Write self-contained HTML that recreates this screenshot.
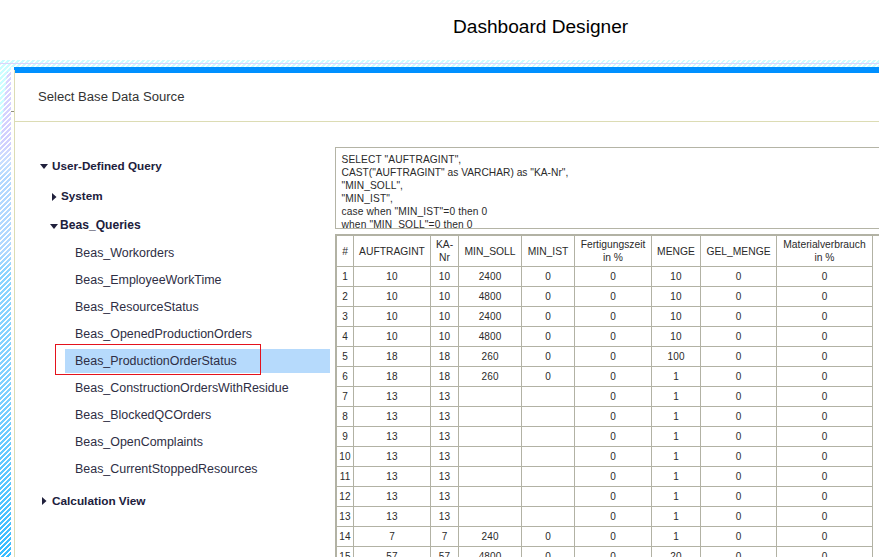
<!DOCTYPE html>
<html><head><meta charset="utf-8"><style>
html,body{margin:0;padding:0;}
body{width:879px;height:557px;overflow:hidden;position:relative;background:#fff;font-family:"Liberation Sans",sans-serif;}
.t{position:absolute;white-space:pre;}
.a{position:absolute;}
.hatchtop{position:absolute;left:0;top:60px;width:879px;height:7px;background:repeating-linear-gradient(135deg,#ffffff 0px,#ffffff 1.6px,#ccfdff 1.6px,#ccfdff 3.54px) fixed;}
.hatchleft{position:absolute;left:0;top:67px;width:11px;height:490px;}
.cell{position:absolute;text-align:center;font-size:10.3px;line-height:13px;color:#2a2a2a;white-space:nowrap;}
</style></head><body>
<div class="t" style="left:453px;top:8.38px;font-size:19.1px;line-height:38px;font-weight:normal;color:#000;">Dashboard Designer</div>
<div class="hatchtop"></div>
<div class="a" style="left:0;top:63px;width:879px;height:1px;background:#dcd4fa"></div>
<div class="hatchleft" style="background:linear-gradient(#ccfdff 0px,#ccfdff 80px,#b4d8ff 110px,#b0d8ff 185px,#8cd4ff 205px,#80d0ff 320px,#58c6ff 420px,#38bcff 490px)"></div>
<div class="a" style="left:0px;top:72px;width:11px;height:105px;background:linear-gradient(#d8d4ff,#d0d0ff 70%,rgba(180,216,255,0));clip-path:polygon(7px 0,11px 0,11px 105px,0 105px,0 75px)"></div>
<div class="hatchleft" style="background:repeating-linear-gradient(135deg,#ffffff 0px,#ffffff 1.6px,rgba(255,255,255,0) 1.6px,rgba(255,255,255,0) 3.54px) fixed"></div>
<div class="a" style="left:11px;top:67px;width:3px;height:490px;background:#fff"></div>
<div class="a" style="left:11px;top:111px;width:3px;height:1px;background:#909080"></div>
<div class="a" style="left:14px;top:67px;width:865px;height:6px;background:#0090ff"></div>
<div class="a" style="left:14px;top:70px;width:1px;height:487px;background:linear-gradient(#f0e6b8,#dcdcb4 4px)"></div>
<div class="a" style="left:15px;top:121px;width:864px;height:1px;background:#dcdcb4"></div>
<div class="t" style="left:38px;top:83.95px;font-size:13.12px;line-height:26px;font-weight:normal;color:#333;">Select Base Data Source</div>
<div class="t" style="left:52px;top:154.45px;font-size:11.7px;line-height:23px;font-weight:bold;color:#20203c;">User-Defined Query</div>
<svg class="a" style="left:40px;top:164px" width="8" height="5"><path d="M0 0H8L4 5Z" fill="#20203c"/></svg>
<div class="t" style="left:61px;top:184.45px;font-size:11.7px;line-height:23px;font-weight:bold;color:#20203c;">System</div>
<svg class="a" style="left:52px;top:193px" width="5" height="8"><path d="M0 0V8L4.5 4Z" fill="#20203c"/></svg>
<div class="t" style="left:60px;top:213.11px;font-size:12.1px;line-height:24px;font-weight:bold;color:#20203c;">Beas_Queries</div>
<svg class="a" style="left:50px;top:224px" width="8" height="5"><path d="M0 0H8L4 5Z" fill="#20203c"/></svg>
<div class="a" style="left:65px;top:349px;width:265px;height:24px;background:#b6dafc"></div>
<div class="a" style="left:55px;top:344px;width:204px;height:29px;border:1px solid #e4121c"></div>
<div class="t" style="left:75px;top:240.89px;font-size:12.45px;line-height:25px;font-weight:normal;color:#2e2e44;">Beas_Workorders</div>
<div class="t" style="left:75px;top:267.89px;font-size:12.45px;line-height:25px;font-weight:normal;color:#2e2e44;">Beas_EmployeeWorkTime</div>
<div class="t" style="left:75px;top:294.89px;font-size:12.45px;line-height:25px;font-weight:normal;color:#2e2e44;">Beas_ResourceStatus</div>
<div class="t" style="left:75px;top:321.89px;font-size:12.45px;line-height:25px;font-weight:normal;color:#2e2e44;">Beas_OpenedProductionOrders</div>
<div class="t" style="left:75px;top:348.89px;font-size:12.45px;line-height:25px;font-weight:normal;color:#2e2e44;">Beas_ProductionOrderStatus</div>
<div class="t" style="left:75px;top:375.89px;font-size:12.45px;line-height:25px;font-weight:normal;color:#2e2e44;">Beas_ConstructionOrdersWithResidue</div>
<div class="t" style="left:75px;top:402.89px;font-size:12.45px;line-height:25px;font-weight:normal;color:#2e2e44;">Beas_BlockedQCOrders</div>
<div class="t" style="left:75px;top:429.89px;font-size:12.45px;line-height:25px;font-weight:normal;color:#2e2e44;">Beas_OpenComplaints</div>
<div class="t" style="left:75px;top:456.89px;font-size:12.45px;line-height:25px;font-weight:normal;color:#2e2e44;">Beas_CurrentStoppedResources</div>
<div class="t" style="left:52px;top:488.71px;font-size:11.8px;line-height:24px;font-weight:bold;color:#20203c;">Calculation View</div>
<svg class="a" style="left:42px;top:497px" width="5" height="8"><path d="M0 0V8L4.5 4Z" fill="#20203c"/></svg>
<div class="a" style="left:335px;top:147px;width:600px;height:80px;border:1px solid #b4b4a6;overflow:hidden">
<div class="t" style="left:5.5px;top:2.27px;font-size:10.2px;line-height:20px;font-weight:normal;color:#2a2a2a;letter-spacing:0.12px">SELECT &quot;AUFTRAGINT&quot;,</div>
<div class="t" style="left:5.5px;top:15.27px;font-size:10.2px;line-height:20px;font-weight:normal;color:#2a2a2a;letter-spacing:0.02px">CAST(&quot;AUFTRAGINT&quot; as VARCHAR) as &quot;KA-Nr&quot;,</div>
<div class="t" style="left:5.5px;top:28.27px;font-size:10.2px;line-height:20px;font-weight:normal;color:#2a2a2a;letter-spacing:0.1px">&quot;MIN_SOLL&quot;,</div>
<div class="t" style="left:5.5px;top:41.27px;font-size:10.2px;line-height:20px;font-weight:normal;color:#2a2a2a;letter-spacing:0.12px">&quot;MIN_IST&quot;,</div>
<div class="t" style="left:5.5px;top:54.27px;font-size:10.2px;line-height:20px;font-weight:normal;color:#2a2a2a;letter-spacing:0.15px">case when &quot;MIN_IST&quot;=0 then 0</div>
<div class="t" style="left:5.5px;top:67.27px;font-size:10.2px;line-height:20px;font-weight:normal;color:#2a2a2a;letter-spacing:0.15px">when &quot;MIN_SOLL&quot;=0 then 0</div>
</div>
<div class="a" style="left:335px;top:234px;width:544px;height:2px;background:#b2b2a4"></div>
<div class="a" style="left:335px;top:234px;width:2px;height:323px;background:#b2b2a4"></div>
<div class="a" style="left:353px;top:236px;width:1px;height:321px;background:#b2b2a4"></div>
<div class="a" style="left:430px;top:236px;width:1px;height:321px;background:#b2b2a4"></div>
<div class="a" style="left:458px;top:236px;width:1px;height:321px;background:#b2b2a4"></div>
<div class="a" style="left:521px;top:236px;width:1px;height:321px;background:#b2b2a4"></div>
<div class="a" style="left:574px;top:236px;width:1px;height:321px;background:#b2b2a4"></div>
<div class="a" style="left:651px;top:236px;width:1px;height:321px;background:#b2b2a4"></div>
<div class="a" style="left:700px;top:236px;width:1px;height:321px;background:#b2b2a4"></div>
<div class="a" style="left:776px;top:236px;width:1px;height:321px;background:#b2b2a4"></div>
<div class="a" style="left:872px;top:236px;width:1px;height:321px;background:#b2b2a4"></div>
<div class="a" style="left:337px;top:266px;width:536px;height:1px;background:#b2b2a4"></div>
<div class="a" style="left:337px;top:286px;width:536px;height:1px;background:#b2b2a4"></div>
<div class="a" style="left:337px;top:306px;width:536px;height:1px;background:#b2b2a4"></div>
<div class="a" style="left:337px;top:326px;width:536px;height:1px;background:#b2b2a4"></div>
<div class="a" style="left:337px;top:346px;width:536px;height:1px;background:#b2b2a4"></div>
<div class="a" style="left:337px;top:366px;width:536px;height:1px;background:#b2b2a4"></div>
<div class="a" style="left:337px;top:386px;width:536px;height:1px;background:#b2b2a4"></div>
<div class="a" style="left:337px;top:406px;width:536px;height:1px;background:#b2b2a4"></div>
<div class="a" style="left:337px;top:426px;width:536px;height:1px;background:#b2b2a4"></div>
<div class="a" style="left:337px;top:446px;width:536px;height:1px;background:#b2b2a4"></div>
<div class="a" style="left:337px;top:466px;width:536px;height:1px;background:#b2b2a4"></div>
<div class="a" style="left:337px;top:486px;width:536px;height:1px;background:#b2b2a4"></div>
<div class="a" style="left:337px;top:506px;width:536px;height:1px;background:#b2b2a4"></div>
<div class="a" style="left:337px;top:526px;width:536px;height:1px;background:#b2b2a4"></div>
<div class="a" style="left:337px;top:546px;width:536px;height:1px;background:#b2b2a4"></div>
<div class="cell" style="left:337px;top:236px;width:16px;height:30px;display:flex;align-items:center;justify-content:center;"><div>#</div></div>
<div class="cell" style="left:354px;top:236px;width:76px;height:30px;display:flex;align-items:center;justify-content:center;"><div>AUFTRAGINT</div></div>
<div class="cell" style="left:431px;top:236px;width:27px;height:30px;display:flex;align-items:center;justify-content:center;"><div>KA-<br>Nr</div></div>
<div class="cell" style="left:459px;top:236px;width:62px;height:30px;display:flex;align-items:center;justify-content:center;"><div>MIN_SOLL</div></div>
<div class="cell" style="left:522px;top:236px;width:52px;height:30px;display:flex;align-items:center;justify-content:center;"><div>MIN_IST</div></div>
<div class="cell" style="left:575px;top:236px;width:76px;height:30px;display:flex;align-items:center;justify-content:center;"><div>Fertigungszeit<br>in %</div></div>
<div class="cell" style="left:652px;top:236px;width:48px;height:30px;display:flex;align-items:center;justify-content:center;"><div>MENGE</div></div>
<div class="cell" style="left:701px;top:236px;width:75px;height:30px;display:flex;align-items:center;justify-content:center;"><div>GEL_MENGE</div></div>
<div class="cell" style="left:777px;top:236px;width:95px;height:30px;display:flex;align-items:center;justify-content:center;"><div>Materialverbrauch<br>in %</div></div>
<div class="cell" style="left:337px;top:267px;width:16px;height:19px;line-height:19px;text-align:center;font-size:10px;letter-spacing:0.15px;padding-left:0.15px;box-sizing:border-box">1</div>
<div class="cell" style="left:354px;top:267px;width:76px;height:19px;line-height:19px;text-align:center;font-size:10px;letter-spacing:0.15px;padding-left:0.15px;box-sizing:border-box">10</div>
<div class="cell" style="left:431px;top:267px;width:27px;height:19px;line-height:19px;text-align:center;font-size:10px;letter-spacing:0.15px;padding-left:0.15px;box-sizing:border-box">10</div>
<div class="cell" style="left:459px;top:267px;width:62px;height:19px;line-height:19px;text-align:center;font-size:10px;letter-spacing:0.15px;padding-left:0.15px;box-sizing:border-box">2400</div>
<div class="cell" style="left:522px;top:267px;width:52px;height:19px;line-height:19px;text-align:center;font-size:10px;letter-spacing:0.15px;padding-left:0.15px;box-sizing:border-box">0</div>
<div class="cell" style="left:575px;top:267px;width:76px;height:19px;line-height:19px;text-align:center;font-size:10px;letter-spacing:0.15px;padding-left:0.15px;box-sizing:border-box">0</div>
<div class="cell" style="left:652px;top:267px;width:48px;height:19px;line-height:19px;text-align:center;font-size:10px;letter-spacing:0.15px;padding-left:0.15px;box-sizing:border-box">10</div>
<div class="cell" style="left:701px;top:267px;width:75px;height:19px;line-height:19px;text-align:center;font-size:10px;letter-spacing:0.15px;padding-left:0.15px;box-sizing:border-box">0</div>
<div class="cell" style="left:777px;top:267px;width:95px;height:19px;line-height:19px;text-align:center;font-size:10px;letter-spacing:0.15px;padding-left:0.15px;box-sizing:border-box">0</div>
<div class="cell" style="left:337px;top:287px;width:16px;height:19px;line-height:19px;text-align:center;font-size:10px;letter-spacing:0.15px;padding-left:0.15px;box-sizing:border-box">2</div>
<div class="cell" style="left:354px;top:287px;width:76px;height:19px;line-height:19px;text-align:center;font-size:10px;letter-spacing:0.15px;padding-left:0.15px;box-sizing:border-box">10</div>
<div class="cell" style="left:431px;top:287px;width:27px;height:19px;line-height:19px;text-align:center;font-size:10px;letter-spacing:0.15px;padding-left:0.15px;box-sizing:border-box">10</div>
<div class="cell" style="left:459px;top:287px;width:62px;height:19px;line-height:19px;text-align:center;font-size:10px;letter-spacing:0.15px;padding-left:0.15px;box-sizing:border-box">4800</div>
<div class="cell" style="left:522px;top:287px;width:52px;height:19px;line-height:19px;text-align:center;font-size:10px;letter-spacing:0.15px;padding-left:0.15px;box-sizing:border-box">0</div>
<div class="cell" style="left:575px;top:287px;width:76px;height:19px;line-height:19px;text-align:center;font-size:10px;letter-spacing:0.15px;padding-left:0.15px;box-sizing:border-box">0</div>
<div class="cell" style="left:652px;top:287px;width:48px;height:19px;line-height:19px;text-align:center;font-size:10px;letter-spacing:0.15px;padding-left:0.15px;box-sizing:border-box">10</div>
<div class="cell" style="left:701px;top:287px;width:75px;height:19px;line-height:19px;text-align:center;font-size:10px;letter-spacing:0.15px;padding-left:0.15px;box-sizing:border-box">0</div>
<div class="cell" style="left:777px;top:287px;width:95px;height:19px;line-height:19px;text-align:center;font-size:10px;letter-spacing:0.15px;padding-left:0.15px;box-sizing:border-box">0</div>
<div class="cell" style="left:337px;top:307px;width:16px;height:19px;line-height:19px;text-align:center;font-size:10px;letter-spacing:0.15px;padding-left:0.15px;box-sizing:border-box">3</div>
<div class="cell" style="left:354px;top:307px;width:76px;height:19px;line-height:19px;text-align:center;font-size:10px;letter-spacing:0.15px;padding-left:0.15px;box-sizing:border-box">10</div>
<div class="cell" style="left:431px;top:307px;width:27px;height:19px;line-height:19px;text-align:center;font-size:10px;letter-spacing:0.15px;padding-left:0.15px;box-sizing:border-box">10</div>
<div class="cell" style="left:459px;top:307px;width:62px;height:19px;line-height:19px;text-align:center;font-size:10px;letter-spacing:0.15px;padding-left:0.15px;box-sizing:border-box">2400</div>
<div class="cell" style="left:522px;top:307px;width:52px;height:19px;line-height:19px;text-align:center;font-size:10px;letter-spacing:0.15px;padding-left:0.15px;box-sizing:border-box">0</div>
<div class="cell" style="left:575px;top:307px;width:76px;height:19px;line-height:19px;text-align:center;font-size:10px;letter-spacing:0.15px;padding-left:0.15px;box-sizing:border-box">0</div>
<div class="cell" style="left:652px;top:307px;width:48px;height:19px;line-height:19px;text-align:center;font-size:10px;letter-spacing:0.15px;padding-left:0.15px;box-sizing:border-box">10</div>
<div class="cell" style="left:701px;top:307px;width:75px;height:19px;line-height:19px;text-align:center;font-size:10px;letter-spacing:0.15px;padding-left:0.15px;box-sizing:border-box">0</div>
<div class="cell" style="left:777px;top:307px;width:95px;height:19px;line-height:19px;text-align:center;font-size:10px;letter-spacing:0.15px;padding-left:0.15px;box-sizing:border-box">0</div>
<div class="cell" style="left:337px;top:327px;width:16px;height:19px;line-height:19px;text-align:center;font-size:10px;letter-spacing:0.15px;padding-left:0.15px;box-sizing:border-box">4</div>
<div class="cell" style="left:354px;top:327px;width:76px;height:19px;line-height:19px;text-align:center;font-size:10px;letter-spacing:0.15px;padding-left:0.15px;box-sizing:border-box">10</div>
<div class="cell" style="left:431px;top:327px;width:27px;height:19px;line-height:19px;text-align:center;font-size:10px;letter-spacing:0.15px;padding-left:0.15px;box-sizing:border-box">10</div>
<div class="cell" style="left:459px;top:327px;width:62px;height:19px;line-height:19px;text-align:center;font-size:10px;letter-spacing:0.15px;padding-left:0.15px;box-sizing:border-box">4800</div>
<div class="cell" style="left:522px;top:327px;width:52px;height:19px;line-height:19px;text-align:center;font-size:10px;letter-spacing:0.15px;padding-left:0.15px;box-sizing:border-box">0</div>
<div class="cell" style="left:575px;top:327px;width:76px;height:19px;line-height:19px;text-align:center;font-size:10px;letter-spacing:0.15px;padding-left:0.15px;box-sizing:border-box">0</div>
<div class="cell" style="left:652px;top:327px;width:48px;height:19px;line-height:19px;text-align:center;font-size:10px;letter-spacing:0.15px;padding-left:0.15px;box-sizing:border-box">10</div>
<div class="cell" style="left:701px;top:327px;width:75px;height:19px;line-height:19px;text-align:center;font-size:10px;letter-spacing:0.15px;padding-left:0.15px;box-sizing:border-box">0</div>
<div class="cell" style="left:777px;top:327px;width:95px;height:19px;line-height:19px;text-align:center;font-size:10px;letter-spacing:0.15px;padding-left:0.15px;box-sizing:border-box">0</div>
<div class="cell" style="left:337px;top:347px;width:16px;height:19px;line-height:19px;text-align:center;font-size:10px;letter-spacing:0.15px;padding-left:0.15px;box-sizing:border-box">5</div>
<div class="cell" style="left:354px;top:347px;width:76px;height:19px;line-height:19px;text-align:center;font-size:10px;letter-spacing:0.15px;padding-left:0.15px;box-sizing:border-box">18</div>
<div class="cell" style="left:431px;top:347px;width:27px;height:19px;line-height:19px;text-align:center;font-size:10px;letter-spacing:0.15px;padding-left:0.15px;box-sizing:border-box">18</div>
<div class="cell" style="left:459px;top:347px;width:62px;height:19px;line-height:19px;text-align:center;font-size:10px;letter-spacing:0.15px;padding-left:0.15px;box-sizing:border-box">260</div>
<div class="cell" style="left:522px;top:347px;width:52px;height:19px;line-height:19px;text-align:center;font-size:10px;letter-spacing:0.15px;padding-left:0.15px;box-sizing:border-box">0</div>
<div class="cell" style="left:575px;top:347px;width:76px;height:19px;line-height:19px;text-align:center;font-size:10px;letter-spacing:0.15px;padding-left:0.15px;box-sizing:border-box">0</div>
<div class="cell" style="left:652px;top:347px;width:48px;height:19px;line-height:19px;text-align:center;font-size:10px;letter-spacing:0.15px;padding-left:0.15px;box-sizing:border-box">100</div>
<div class="cell" style="left:701px;top:347px;width:75px;height:19px;line-height:19px;text-align:center;font-size:10px;letter-spacing:0.15px;padding-left:0.15px;box-sizing:border-box">0</div>
<div class="cell" style="left:777px;top:347px;width:95px;height:19px;line-height:19px;text-align:center;font-size:10px;letter-spacing:0.15px;padding-left:0.15px;box-sizing:border-box">0</div>
<div class="cell" style="left:337px;top:367px;width:16px;height:19px;line-height:19px;text-align:center;font-size:10px;letter-spacing:0.15px;padding-left:0.15px;box-sizing:border-box">6</div>
<div class="cell" style="left:354px;top:367px;width:76px;height:19px;line-height:19px;text-align:center;font-size:10px;letter-spacing:0.15px;padding-left:0.15px;box-sizing:border-box">18</div>
<div class="cell" style="left:431px;top:367px;width:27px;height:19px;line-height:19px;text-align:center;font-size:10px;letter-spacing:0.15px;padding-left:0.15px;box-sizing:border-box">18</div>
<div class="cell" style="left:459px;top:367px;width:62px;height:19px;line-height:19px;text-align:center;font-size:10px;letter-spacing:0.15px;padding-left:0.15px;box-sizing:border-box">260</div>
<div class="cell" style="left:522px;top:367px;width:52px;height:19px;line-height:19px;text-align:center;font-size:10px;letter-spacing:0.15px;padding-left:0.15px;box-sizing:border-box">0</div>
<div class="cell" style="left:575px;top:367px;width:76px;height:19px;line-height:19px;text-align:center;font-size:10px;letter-spacing:0.15px;padding-left:0.15px;box-sizing:border-box">0</div>
<div class="cell" style="left:652px;top:367px;width:48px;height:19px;line-height:19px;text-align:center;font-size:10px;letter-spacing:0.15px;padding-left:0.15px;box-sizing:border-box">1</div>
<div class="cell" style="left:701px;top:367px;width:75px;height:19px;line-height:19px;text-align:center;font-size:10px;letter-spacing:0.15px;padding-left:0.15px;box-sizing:border-box">0</div>
<div class="cell" style="left:777px;top:367px;width:95px;height:19px;line-height:19px;text-align:center;font-size:10px;letter-spacing:0.15px;padding-left:0.15px;box-sizing:border-box">0</div>
<div class="cell" style="left:337px;top:387px;width:16px;height:19px;line-height:19px;text-align:center;font-size:10px;letter-spacing:0.15px;padding-left:0.15px;box-sizing:border-box">7</div>
<div class="cell" style="left:354px;top:387px;width:76px;height:19px;line-height:19px;text-align:center;font-size:10px;letter-spacing:0.15px;padding-left:0.15px;box-sizing:border-box">13</div>
<div class="cell" style="left:431px;top:387px;width:27px;height:19px;line-height:19px;text-align:center;font-size:10px;letter-spacing:0.15px;padding-left:0.15px;box-sizing:border-box">13</div>
<div class="cell" style="left:459px;top:387px;width:62px;height:19px;line-height:19px;text-align:center;font-size:10px;letter-spacing:0.15px;padding-left:0.15px;box-sizing:border-box"></div>
<div class="cell" style="left:522px;top:387px;width:52px;height:19px;line-height:19px;text-align:center;font-size:10px;letter-spacing:0.15px;padding-left:0.15px;box-sizing:border-box"></div>
<div class="cell" style="left:575px;top:387px;width:76px;height:19px;line-height:19px;text-align:center;font-size:10px;letter-spacing:0.15px;padding-left:0.15px;box-sizing:border-box">0</div>
<div class="cell" style="left:652px;top:387px;width:48px;height:19px;line-height:19px;text-align:center;font-size:10px;letter-spacing:0.15px;padding-left:0.15px;box-sizing:border-box">1</div>
<div class="cell" style="left:701px;top:387px;width:75px;height:19px;line-height:19px;text-align:center;font-size:10px;letter-spacing:0.15px;padding-left:0.15px;box-sizing:border-box">0</div>
<div class="cell" style="left:777px;top:387px;width:95px;height:19px;line-height:19px;text-align:center;font-size:10px;letter-spacing:0.15px;padding-left:0.15px;box-sizing:border-box">0</div>
<div class="cell" style="left:337px;top:407px;width:16px;height:19px;line-height:19px;text-align:center;font-size:10px;letter-spacing:0.15px;padding-left:0.15px;box-sizing:border-box">8</div>
<div class="cell" style="left:354px;top:407px;width:76px;height:19px;line-height:19px;text-align:center;font-size:10px;letter-spacing:0.15px;padding-left:0.15px;box-sizing:border-box">13</div>
<div class="cell" style="left:431px;top:407px;width:27px;height:19px;line-height:19px;text-align:center;font-size:10px;letter-spacing:0.15px;padding-left:0.15px;box-sizing:border-box">13</div>
<div class="cell" style="left:459px;top:407px;width:62px;height:19px;line-height:19px;text-align:center;font-size:10px;letter-spacing:0.15px;padding-left:0.15px;box-sizing:border-box"></div>
<div class="cell" style="left:522px;top:407px;width:52px;height:19px;line-height:19px;text-align:center;font-size:10px;letter-spacing:0.15px;padding-left:0.15px;box-sizing:border-box"></div>
<div class="cell" style="left:575px;top:407px;width:76px;height:19px;line-height:19px;text-align:center;font-size:10px;letter-spacing:0.15px;padding-left:0.15px;box-sizing:border-box">0</div>
<div class="cell" style="left:652px;top:407px;width:48px;height:19px;line-height:19px;text-align:center;font-size:10px;letter-spacing:0.15px;padding-left:0.15px;box-sizing:border-box">1</div>
<div class="cell" style="left:701px;top:407px;width:75px;height:19px;line-height:19px;text-align:center;font-size:10px;letter-spacing:0.15px;padding-left:0.15px;box-sizing:border-box">0</div>
<div class="cell" style="left:777px;top:407px;width:95px;height:19px;line-height:19px;text-align:center;font-size:10px;letter-spacing:0.15px;padding-left:0.15px;box-sizing:border-box">0</div>
<div class="cell" style="left:337px;top:427px;width:16px;height:19px;line-height:19px;text-align:center;font-size:10px;letter-spacing:0.15px;padding-left:0.15px;box-sizing:border-box">9</div>
<div class="cell" style="left:354px;top:427px;width:76px;height:19px;line-height:19px;text-align:center;font-size:10px;letter-spacing:0.15px;padding-left:0.15px;box-sizing:border-box">13</div>
<div class="cell" style="left:431px;top:427px;width:27px;height:19px;line-height:19px;text-align:center;font-size:10px;letter-spacing:0.15px;padding-left:0.15px;box-sizing:border-box">13</div>
<div class="cell" style="left:459px;top:427px;width:62px;height:19px;line-height:19px;text-align:center;font-size:10px;letter-spacing:0.15px;padding-left:0.15px;box-sizing:border-box"></div>
<div class="cell" style="left:522px;top:427px;width:52px;height:19px;line-height:19px;text-align:center;font-size:10px;letter-spacing:0.15px;padding-left:0.15px;box-sizing:border-box"></div>
<div class="cell" style="left:575px;top:427px;width:76px;height:19px;line-height:19px;text-align:center;font-size:10px;letter-spacing:0.15px;padding-left:0.15px;box-sizing:border-box">0</div>
<div class="cell" style="left:652px;top:427px;width:48px;height:19px;line-height:19px;text-align:center;font-size:10px;letter-spacing:0.15px;padding-left:0.15px;box-sizing:border-box">1</div>
<div class="cell" style="left:701px;top:427px;width:75px;height:19px;line-height:19px;text-align:center;font-size:10px;letter-spacing:0.15px;padding-left:0.15px;box-sizing:border-box">0</div>
<div class="cell" style="left:777px;top:427px;width:95px;height:19px;line-height:19px;text-align:center;font-size:10px;letter-spacing:0.15px;padding-left:0.15px;box-sizing:border-box">0</div>
<div class="cell" style="left:337px;top:447px;width:16px;height:19px;line-height:19px;text-align:center;font-size:10px;letter-spacing:0.15px;padding-left:0.15px;box-sizing:border-box">10</div>
<div class="cell" style="left:354px;top:447px;width:76px;height:19px;line-height:19px;text-align:center;font-size:10px;letter-spacing:0.15px;padding-left:0.15px;box-sizing:border-box">13</div>
<div class="cell" style="left:431px;top:447px;width:27px;height:19px;line-height:19px;text-align:center;font-size:10px;letter-spacing:0.15px;padding-left:0.15px;box-sizing:border-box">13</div>
<div class="cell" style="left:459px;top:447px;width:62px;height:19px;line-height:19px;text-align:center;font-size:10px;letter-spacing:0.15px;padding-left:0.15px;box-sizing:border-box"></div>
<div class="cell" style="left:522px;top:447px;width:52px;height:19px;line-height:19px;text-align:center;font-size:10px;letter-spacing:0.15px;padding-left:0.15px;box-sizing:border-box"></div>
<div class="cell" style="left:575px;top:447px;width:76px;height:19px;line-height:19px;text-align:center;font-size:10px;letter-spacing:0.15px;padding-left:0.15px;box-sizing:border-box">0</div>
<div class="cell" style="left:652px;top:447px;width:48px;height:19px;line-height:19px;text-align:center;font-size:10px;letter-spacing:0.15px;padding-left:0.15px;box-sizing:border-box">1</div>
<div class="cell" style="left:701px;top:447px;width:75px;height:19px;line-height:19px;text-align:center;font-size:10px;letter-spacing:0.15px;padding-left:0.15px;box-sizing:border-box">0</div>
<div class="cell" style="left:777px;top:447px;width:95px;height:19px;line-height:19px;text-align:center;font-size:10px;letter-spacing:0.15px;padding-left:0.15px;box-sizing:border-box">0</div>
<div class="cell" style="left:337px;top:467px;width:16px;height:19px;line-height:19px;text-align:center;font-size:10px;letter-spacing:0.15px;padding-left:0.15px;box-sizing:border-box">11</div>
<div class="cell" style="left:354px;top:467px;width:76px;height:19px;line-height:19px;text-align:center;font-size:10px;letter-spacing:0.15px;padding-left:0.15px;box-sizing:border-box">13</div>
<div class="cell" style="left:431px;top:467px;width:27px;height:19px;line-height:19px;text-align:center;font-size:10px;letter-spacing:0.15px;padding-left:0.15px;box-sizing:border-box">13</div>
<div class="cell" style="left:459px;top:467px;width:62px;height:19px;line-height:19px;text-align:center;font-size:10px;letter-spacing:0.15px;padding-left:0.15px;box-sizing:border-box"></div>
<div class="cell" style="left:522px;top:467px;width:52px;height:19px;line-height:19px;text-align:center;font-size:10px;letter-spacing:0.15px;padding-left:0.15px;box-sizing:border-box"></div>
<div class="cell" style="left:575px;top:467px;width:76px;height:19px;line-height:19px;text-align:center;font-size:10px;letter-spacing:0.15px;padding-left:0.15px;box-sizing:border-box">0</div>
<div class="cell" style="left:652px;top:467px;width:48px;height:19px;line-height:19px;text-align:center;font-size:10px;letter-spacing:0.15px;padding-left:0.15px;box-sizing:border-box">1</div>
<div class="cell" style="left:701px;top:467px;width:75px;height:19px;line-height:19px;text-align:center;font-size:10px;letter-spacing:0.15px;padding-left:0.15px;box-sizing:border-box">0</div>
<div class="cell" style="left:777px;top:467px;width:95px;height:19px;line-height:19px;text-align:center;font-size:10px;letter-spacing:0.15px;padding-left:0.15px;box-sizing:border-box">0</div>
<div class="cell" style="left:337px;top:487px;width:16px;height:19px;line-height:19px;text-align:center;font-size:10px;letter-spacing:0.15px;padding-left:0.15px;box-sizing:border-box">12</div>
<div class="cell" style="left:354px;top:487px;width:76px;height:19px;line-height:19px;text-align:center;font-size:10px;letter-spacing:0.15px;padding-left:0.15px;box-sizing:border-box">13</div>
<div class="cell" style="left:431px;top:487px;width:27px;height:19px;line-height:19px;text-align:center;font-size:10px;letter-spacing:0.15px;padding-left:0.15px;box-sizing:border-box">13</div>
<div class="cell" style="left:459px;top:487px;width:62px;height:19px;line-height:19px;text-align:center;font-size:10px;letter-spacing:0.15px;padding-left:0.15px;box-sizing:border-box"></div>
<div class="cell" style="left:522px;top:487px;width:52px;height:19px;line-height:19px;text-align:center;font-size:10px;letter-spacing:0.15px;padding-left:0.15px;box-sizing:border-box"></div>
<div class="cell" style="left:575px;top:487px;width:76px;height:19px;line-height:19px;text-align:center;font-size:10px;letter-spacing:0.15px;padding-left:0.15px;box-sizing:border-box">0</div>
<div class="cell" style="left:652px;top:487px;width:48px;height:19px;line-height:19px;text-align:center;font-size:10px;letter-spacing:0.15px;padding-left:0.15px;box-sizing:border-box">1</div>
<div class="cell" style="left:701px;top:487px;width:75px;height:19px;line-height:19px;text-align:center;font-size:10px;letter-spacing:0.15px;padding-left:0.15px;box-sizing:border-box">0</div>
<div class="cell" style="left:777px;top:487px;width:95px;height:19px;line-height:19px;text-align:center;font-size:10px;letter-spacing:0.15px;padding-left:0.15px;box-sizing:border-box">0</div>
<div class="cell" style="left:337px;top:507px;width:16px;height:19px;line-height:19px;text-align:center;font-size:10px;letter-spacing:0.15px;padding-left:0.15px;box-sizing:border-box">13</div>
<div class="cell" style="left:354px;top:507px;width:76px;height:19px;line-height:19px;text-align:center;font-size:10px;letter-spacing:0.15px;padding-left:0.15px;box-sizing:border-box">13</div>
<div class="cell" style="left:431px;top:507px;width:27px;height:19px;line-height:19px;text-align:center;font-size:10px;letter-spacing:0.15px;padding-left:0.15px;box-sizing:border-box">13</div>
<div class="cell" style="left:459px;top:507px;width:62px;height:19px;line-height:19px;text-align:center;font-size:10px;letter-spacing:0.15px;padding-left:0.15px;box-sizing:border-box"></div>
<div class="cell" style="left:522px;top:507px;width:52px;height:19px;line-height:19px;text-align:center;font-size:10px;letter-spacing:0.15px;padding-left:0.15px;box-sizing:border-box"></div>
<div class="cell" style="left:575px;top:507px;width:76px;height:19px;line-height:19px;text-align:center;font-size:10px;letter-spacing:0.15px;padding-left:0.15px;box-sizing:border-box">0</div>
<div class="cell" style="left:652px;top:507px;width:48px;height:19px;line-height:19px;text-align:center;font-size:10px;letter-spacing:0.15px;padding-left:0.15px;box-sizing:border-box">1</div>
<div class="cell" style="left:701px;top:507px;width:75px;height:19px;line-height:19px;text-align:center;font-size:10px;letter-spacing:0.15px;padding-left:0.15px;box-sizing:border-box">0</div>
<div class="cell" style="left:777px;top:507px;width:95px;height:19px;line-height:19px;text-align:center;font-size:10px;letter-spacing:0.15px;padding-left:0.15px;box-sizing:border-box">0</div>
<div class="cell" style="left:337px;top:527px;width:16px;height:19px;line-height:19px;text-align:center;font-size:10px;letter-spacing:0.15px;padding-left:0.15px;box-sizing:border-box">14</div>
<div class="cell" style="left:354px;top:527px;width:76px;height:19px;line-height:19px;text-align:center;font-size:10px;letter-spacing:0.15px;padding-left:0.15px;box-sizing:border-box">7</div>
<div class="cell" style="left:431px;top:527px;width:27px;height:19px;line-height:19px;text-align:center;font-size:10px;letter-spacing:0.15px;padding-left:0.15px;box-sizing:border-box">7</div>
<div class="cell" style="left:459px;top:527px;width:62px;height:19px;line-height:19px;text-align:center;font-size:10px;letter-spacing:0.15px;padding-left:0.15px;box-sizing:border-box">240</div>
<div class="cell" style="left:522px;top:527px;width:52px;height:19px;line-height:19px;text-align:center;font-size:10px;letter-spacing:0.15px;padding-left:0.15px;box-sizing:border-box">0</div>
<div class="cell" style="left:575px;top:527px;width:76px;height:19px;line-height:19px;text-align:center;font-size:10px;letter-spacing:0.15px;padding-left:0.15px;box-sizing:border-box">0</div>
<div class="cell" style="left:652px;top:527px;width:48px;height:19px;line-height:19px;text-align:center;font-size:10px;letter-spacing:0.15px;padding-left:0.15px;box-sizing:border-box">1</div>
<div class="cell" style="left:701px;top:527px;width:75px;height:19px;line-height:19px;text-align:center;font-size:10px;letter-spacing:0.15px;padding-left:0.15px;box-sizing:border-box">0</div>
<div class="cell" style="left:777px;top:527px;width:95px;height:19px;line-height:19px;text-align:center;font-size:10px;letter-spacing:0.15px;padding-left:0.15px;box-sizing:border-box">0</div>
<div class="cell" style="left:337px;top:547px;width:16px;height:19px;line-height:19px;text-align:center;font-size:10px;letter-spacing:0.15px;padding-left:0.15px;box-sizing:border-box">15</div>
<div class="cell" style="left:354px;top:547px;width:76px;height:19px;line-height:19px;text-align:center;font-size:10px;letter-spacing:0.15px;padding-left:0.15px;box-sizing:border-box">57</div>
<div class="cell" style="left:431px;top:547px;width:27px;height:19px;line-height:19px;text-align:center;font-size:10px;letter-spacing:0.15px;padding-left:0.15px;box-sizing:border-box">57</div>
<div class="cell" style="left:459px;top:547px;width:62px;height:19px;line-height:19px;text-align:center;font-size:10px;letter-spacing:0.15px;padding-left:0.15px;box-sizing:border-box">4800</div>
<div class="cell" style="left:522px;top:547px;width:52px;height:19px;line-height:19px;text-align:center;font-size:10px;letter-spacing:0.15px;padding-left:0.15px;box-sizing:border-box">0</div>
<div class="cell" style="left:575px;top:547px;width:76px;height:19px;line-height:19px;text-align:center;font-size:10px;letter-spacing:0.15px;padding-left:0.15px;box-sizing:border-box">0</div>
<div class="cell" style="left:652px;top:547px;width:48px;height:19px;line-height:19px;text-align:center;font-size:10px;letter-spacing:0.15px;padding-left:0.15px;box-sizing:border-box">20</div>
<div class="cell" style="left:701px;top:547px;width:75px;height:19px;line-height:19px;text-align:center;font-size:10px;letter-spacing:0.15px;padding-left:0.15px;box-sizing:border-box">0</div>
<div class="cell" style="left:777px;top:547px;width:95px;height:19px;line-height:19px;text-align:center;font-size:10px;letter-spacing:0.15px;padding-left:0.15px;box-sizing:border-box">0</div>
</body></html>
